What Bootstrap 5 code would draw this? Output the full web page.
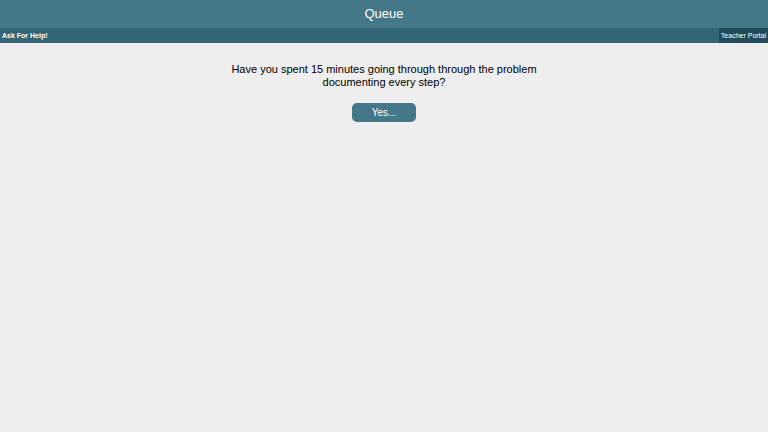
<!DOCTYPE html>
<html lang="en">
<head>
<meta charset="utf-8">
<meta name="viewport" content="width=device-width, initial-scale=1">
<title>Queue</title>
<link href="https://cdn.jsdelivr.net/npm/bootstrap@5.3.0/dist/css/bootstrap.min.css" rel="stylesheet">
<style>
body { background: #eee; color: #000; font-family: "Liberation Sans", Arial, sans-serif; }
.site-header { background: #447788; }
.site-title { font-size: 13px; line-height: 28px; font-weight: 400; }
.site-nav { background: #336677; font-size: 7px; line-height: 15px; }
.ask-link { padding: 0 2px; }
.portal-link { background: #224b59; padding: 0 2px; }
.question { max-width: 308px; font-size: 11px; line-height: 13px; margin-top: 20px; margin-bottom: 14px; }
.answer-btn { --bs-btn-color: #fff; --bs-btn-bg: #447788; --bs-btn-hover-color: #fff; --bs-btn-hover-bg: #336677; --bs-btn-border-width: 0; --bs-btn-border-radius: 5px; --bs-btn-padding-x: 20px; --bs-btn-padding-y: 4px; --bs-btn-font-size: 10px; --bs-btn-line-height: 11px; min-width: 64px; }
</style>
</head>
<body>
<header class="site-header text-center text-white">
  <h1 class="site-title m-0">Queue</h1>
</header>
<nav class="site-nav d-flex justify-content-between">
  <a class="ask-link text-white text-decoration-none fw-bold" href="#">Ask For Help!</a>
  <a class="portal-link text-white text-decoration-none" href="#">Teacher Portal</a>
</nav>
<main class="d-flex flex-column align-items-center text-center">
  <p class="question">Have you spent 15 minutes going through through the problem documenting every step?</p>
  <button type="button" class="btn answer-btn">Yes...</button>
</main>
<script src="https://cdn.jsdelivr.net/npm/bootstrap@5.3.0/dist/js/bootstrap.bundle.min.js"></script>
</body>
</html>
